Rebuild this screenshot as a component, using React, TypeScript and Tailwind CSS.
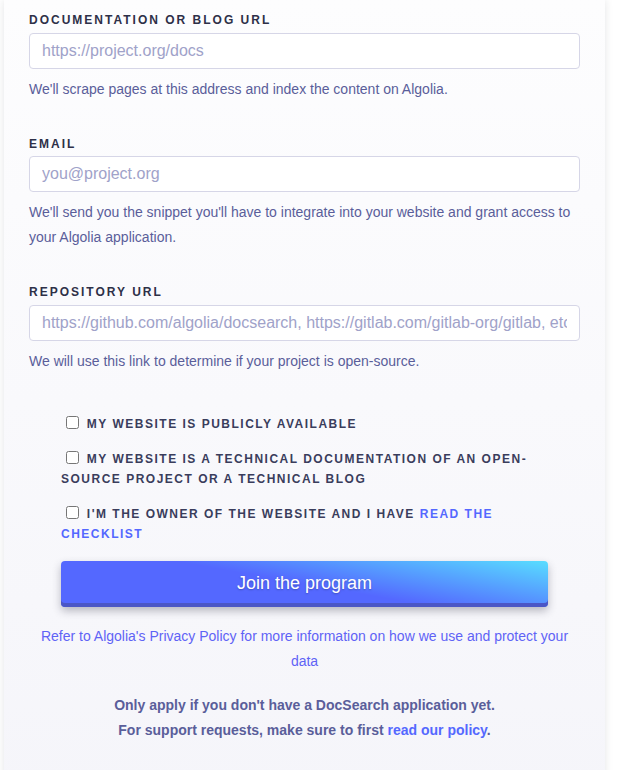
import React from 'react'

const Field = ({ label, placeholder, help, type = 'text' }: { label: string; placeholder: string; help: string; type?: string }) => (
  <div className="mb-[34px]">
    <label className="mb-[3.5px] block text-[12px] font-bold uppercase leading-[17px] tracking-[2px] text-[#2e3048]">
      {label}
    </label>
    <input
      type={type}
      placeholder={placeholder}
      className="block h-[36px] w-full rounded-[4px] border border-[#d6d6e7] bg-white px-[12px] text-[16px] text-[#23263b] outline-none placeholder:text-[#a0a2c9]"
    />
    <p className="mt-[8px] text-[14px] leading-[25px] text-[#5a5e9a]">{help}</p>
  </div>
)

const Check = ({ children, last }: { children: React.ReactNode; last?: boolean }) => (
  <label
    className={
      'block text-[12px] font-bold uppercase leading-[20px] tracking-[1.5px] text-[#3a3d5c] ' +
      (last ? '' : 'mb-[15px]')
    }
  >
    <input type="checkbox" className="ml-[5px] mr-[3px] align-[-1px]" /> {children}
  </label>
)

export default function App() {
  return (
    <div className="min-h-screen bg-white font-['Liberation_Sans',Arial,sans-serif]">
      <div className="ml-1 w-[601px] bg-gradient-to-b from-[#fdfdfe] to-[#f5f5fa] px-[25px] pb-16 pt-[12px] shadow-[0_0_8px_rgba(35,38,59,0.12)]">
        <Field
          label="Documentation or blog URL"
          placeholder="https://project.org/docs"
          help="We'll scrape pages at this address and index the content on Algolia."
        />
        <Field
          label="Email"
          type="email"
          placeholder="you@project.org"
          help="We'll send you the snippet you'll have to integrate into your website and grant access to your Algolia application."
        />
        <Field
          label="Repository URL"
          placeholder="https://github.com/algolia/docsearch, https://gitlab.com/gitlab-org/gitlab, etc"
          help="We will use this link to determine if your project is open-source."
        />

        <div className="-mt-[34px] px-8 pt-[40px]">
          <Check>My website is publicly available</Check>
          <Check>My website is a technical documentation of an open-source project or a technical blog</Check>
          <Check last>
            I'm the owner of the website and I have{' '}
            <a href="#" className="text-[#5468ff]">
              read the checklist
            </a>
          </Check>

          <button
            type="button"
            className="mt-[17px] block h-[46px] w-full rounded-[4px] bg-[linear-gradient(190deg,#58ddff_0%,#5468ff_50%)] pb-[1px] text-[18px] text-white [text-shadow:0_1px_2px_rgba(0,0,0,0.25)] shadow-[inset_0_-4px_0_#4b56c6,0_4px_8px_rgba(35,38,59,0.3)]"
          >
            Join the program
          </button>
        </div>

        <p className="mt-[17.5px] text-center text-[14px] leading-[25px] text-[#5f63f6]">
          Refer to Algolia's Privacy Policy for more information on how we use and protect your data
        </p>

        <div className="mt-[19px] text-center text-[14px] font-bold leading-[25px] text-[#5a5e9a]">
          <p>Only apply if you don't have a DocSearch application yet.</p>
          <p>
            For support requests, make sure to first{' '}
            <a href="#" className="text-[#5468ff]">
              read our policy
            </a>
            .
          </p>
        </div>
      </div>
    </div>
  )
}
